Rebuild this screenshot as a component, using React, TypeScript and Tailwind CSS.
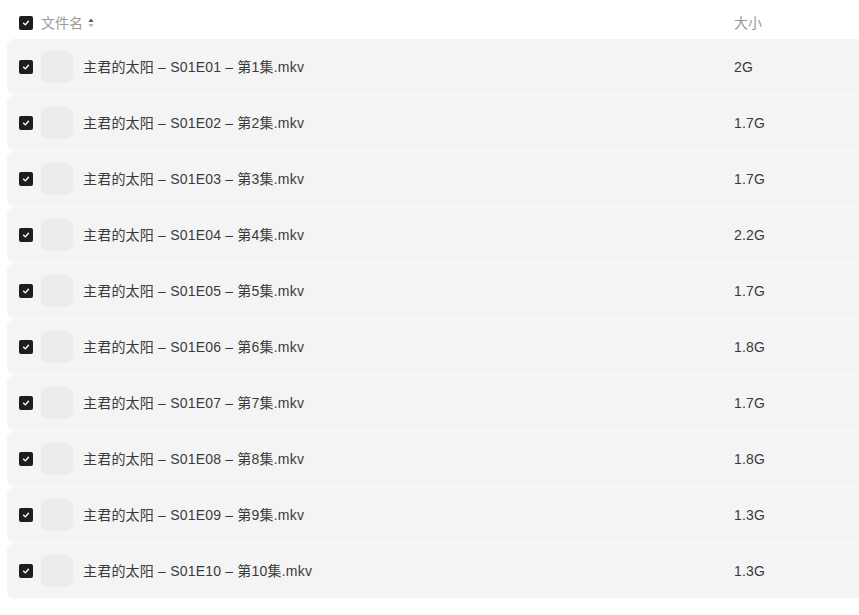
import React from 'react';

const FILES = [
  { ep: 1, size: '2G' },
  { ep: 2, size: '1.7G' },
  { ep: 3, size: '1.7G' },
  { ep: 4, size: '2.2G' },
  { ep: 5, size: '1.7G' },
  { ep: 6, size: '1.8G' },
  { ep: 7, size: '1.7G' },
  { ep: 8, size: '1.8G' },
  { ep: 9, size: '1.3G' },
  { ep: 10, size: '1.3G' },
];

function Check() {
  return (
    <span className="w-[14px] h-[14px] rounded-[2px] bg-[#1d1d1f] flex items-center justify-center shrink-0">
      <svg width="8" height="8" viewBox="0 0 10 10" fill="none">
        <path d="M2 5.2 L4.2 7.3 L8 2.8" stroke="#fff" strokeWidth="1.8" strokeLinecap="round" strokeLinejoin="round" />
      </svg>
    </span>
  );
}

export default function App() {
  return (
    <div
      className="w-[859px] h-[615px] bg-white overflow-hidden text-[14px] leading-[20px]"
      style={{ fontFamily: '"Liberation Sans", "Noto Sans CJK SC", sans-serif' }}
    >
      {/* header */}
      <div className="h-[39px] flex items-center pl-[19px] pt-[7px]">
        <Check />
        <div className="flex-1 flex items-center ml-[8px] text-[#9a9a9a]">
          <span>文件名</span>
          <svg className="ml-[5px]" width="6" height="10" viewBox="0 0 6 10">
            <path d="M3 0.5 L5.5 4 L0.5 4 Z" fill="#555" />
            <path d="M3 9.5 L5.5 6 L0.5 6 Z" fill="#bbb" />
          </svg>
        </div>
        <div className="w-[125px] text-[#9a9a9a]">大小</div>
      </div>

      {/* rows */}
      <div className="pl-[7px] flex flex-col">
        {FILES.map((f) => (
          <div key={f.ep} className="h-[56px] flex items-center bg-[#f4f4f4] rounded-l-[8px] border-b border-[#fafafa] pl-[12px]">
            <Check />
            <div className="w-[32px] h-[32px] rounded-[7px] bg-[#ececec] ml-[8px] shrink-0" />
            <div className="flex-1 ml-[10px] text-[#3a3a3a] pt-[1px] tracking-[0.2px]">
              主君的太阳 – S01E{String(f.ep).padStart(2, '0')} – 第{f.ep}集.mkv
            </div>
            <div className="w-[125px] text-[#3a3a3a] pt-[1px] tracking-[0.2px]">{f.size}</div>
          </div>
        ))}
      </div>
    </div>
  );
}
